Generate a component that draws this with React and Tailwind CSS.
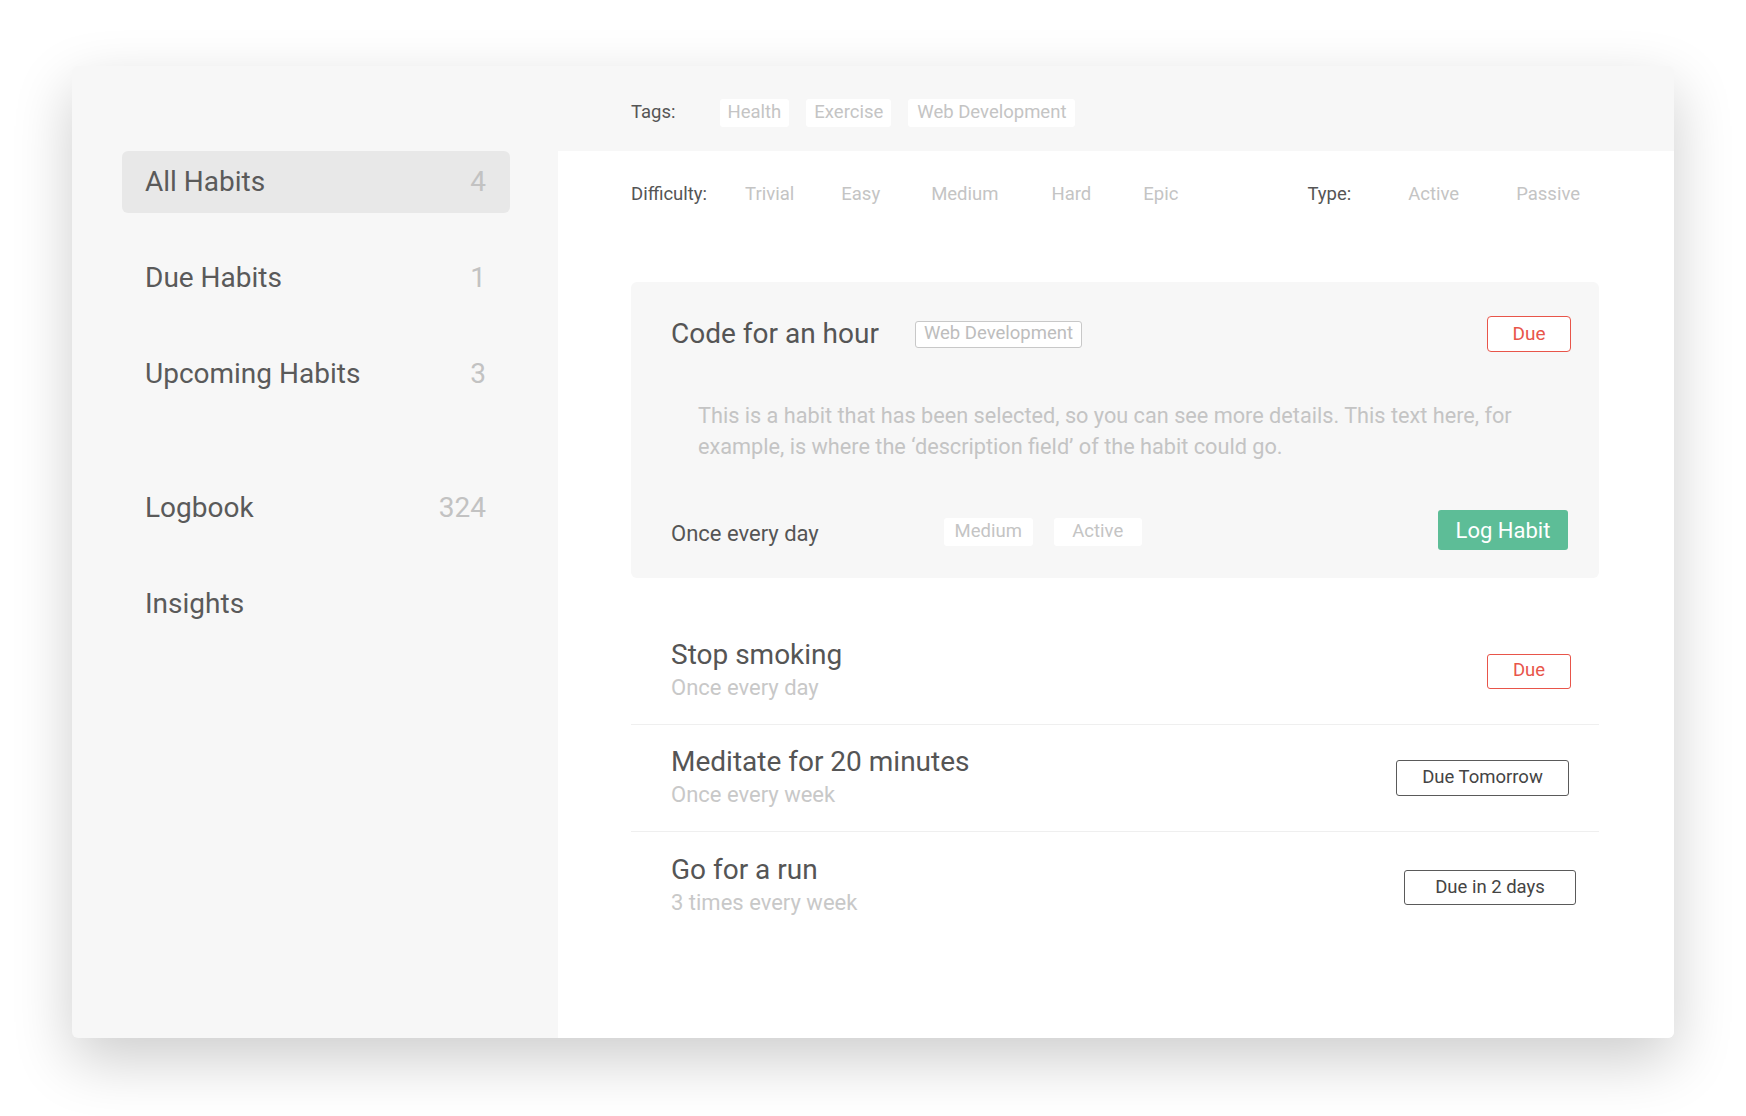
import React from 'react';

const navItems = [
	{ label: 'All Habits', count: '4', active: true },
	{ label: 'Due Habits', count: '1' },
	{ label: 'Upcoming Habits', count: '3' },
	{ label: 'Logbook', count: '324', spaced: true },
	{ label: 'Insights', count: '' },
];

const habits = [
	{ title: 'Stop smoking', freq: 'Once every day', due: 'Due', urgent: true, btn: 'w-[84px] h-[35px]' },
	{ title: 'Meditate for 20 minutes', freq: 'Once every week', due: 'Due Tomorrow', btn: 'w-[173px] h-[36px] mr-[2px]' },
	{ title: 'Go for a run', freq: '3 times every week', due: 'Due in 2 days', btn: 'w-[172px] h-[35px] -mr-[5px] mt-[4px]' },
];

function Chip({ children, className = '' }) {
	return (
		<span className={`h-[28px] flex items-center justify-center rounded-[3px] bg-white text-[18.5px] text-[#c4c4c4] ${className}`}>
			{children}
		</span>
	);
}

function App() {
	return (
		<div className="min-h-screen bg-white pl-[72px] pt-[66px] font-[family-name:Roboto,sans-serif]">
			<div className="w-[1602px] h-[972px] flex rounded-md bg-[#f7f7f7] overflow-hidden shadow-[0_22px_60px_rgba(0,0,0,0.2)]">
				{/* sidebar */}
				<div className="w-[486px] shrink-0 pt-[85px] pl-[50px] flex flex-col gap-[34px]">
					{navItems.map((item) => (
						<div
							key={item.label}
							className={`w-[388px] h-[62px] shrink-0 flex items-center justify-between pl-[23px] pr-[24px] rounded-md text-[28px] ${
								item.active ? 'bg-[#e8e8e8]' : ''
							} ${item.spaced ? 'mt-[38px]' : ''}`}
						>
							<span className="text-[#5a5a5a]">{item.label}</span>
							<span className="text-[#c2c2c2]">{item.count}</span>
						</div>
					))}
				</div>

				{/* main */}
				<div className="flex-1 flex flex-col">
					<div className="h-[85px] shrink-0 flex items-center pl-[73px] pt-[9px]">
						<span className="text-[18.5px] text-[#555]">Tags:</span>
						<div className="flex items-center gap-[17px] ml-[44px]">
							<Chip className="px-[8px]">Health</Chip>
							<Chip className="px-[8px]">Exercise</Chip>
							<Chip className="px-[9px]">Web Development</Chip>
						</div>
					</div>

					<div className="flex-1 bg-white pl-[73px] pr-[75px]">
						<div className="h-[28px] mt-[30px] flex items-center text-[18.5px] text-[#c4c4c4]">
							<span className="text-[#555]">Difficulty:</span>
							<span className="ml-[38px]">Trivial</span>
							<span className="ml-[47px]">Easy</span>
							<span className="ml-[51px]">Medium</span>
							<span className="ml-[53px]">Hard</span>
							<span className="ml-[52px]">Epic</span>
							<span className="ml-[129px] text-[#555]">Type:</span>
							<span className="ml-[57px]">Active</span>
							<span className="ml-[57px]">Passive</span>
						</div>

						{/* selected habit */}
						<div className="mt-[73px] rounded-md bg-[#f7f7f7] pt-[34px] pl-[40px] pr-[28px] pb-[28px]">
							<div className="h-[36px] flex items-center">
								<span className="text-[28px] leading-[34px] text-[#555]">Code for an hour</span>
								<span className="ml-[36px] h-[27px] px-[8px] flex items-center rounded-[3px] border-[1.5px] border-[#c8c8c8] bg-white text-[18.5px] text-[#bdbdbd]">
									Web Development
								</span>
								<button className="ml-auto w-[84px] h-[36px] rounded-[4px] border-[1.5px] border-[#e8554a] bg-white text-[19px] text-[#e8554a]">
									Due
								</button>
							</div>
							<p className="mt-[48px] pl-[27px] max-w-[880px] text-[21.7px] leading-[31px] text-[#c4c4c4]">
								This is a habit that has been selected, so you can see more details. This text here, for
								example, is where the ‘description field’ of the habit could go.
							</p>
							<div className="mt-[48px] h-[40px] flex items-center">
								<span className="mt-[7px] text-[22px] text-[#555]">Once every day</span>
								<div className="ml-[125px] mt-[4px] flex items-center gap-[21px]">
									<Chip className="w-[89px]">Medium</Chip>
									<Chip className="w-[88px]">Active</Chip>
								</div>
								<button className="ml-auto mr-[3px] w-[130px] h-[40px] rounded-[3px] bg-[#5dbd97] text-[22px] text-white">
									Log Habit
								</button>
							</div>
						</div>

						{/* habit list */}
						<div className="mt-[40px]">
							{habits.map((h, i) => (
								<div
									key={h.title}
									className={`h-[107px] flex items-center justify-between pl-[40px] pr-[28px] ${
										i < habits.length - 1 ? 'border-b border-[#efefef]' : ''
									}`}
								>
									<div>
										<div className="text-[28px] leading-[34px] text-[#555]">{h.title}</div>
										<div className="text-[22px] leading-[32px] text-[#c8c8c8]">{h.freq}</div>
									</div>
									<button
										className={`${h.btn} rounded-[3px] border-[1.5px] bg-white text-[18.5px] ${
											h.urgent ? 'border-[#e8554a] text-[#e8554a]' : 'border-[#5a5a5a] text-[#444]'
										}`}
									>
										{h.due}
									</button>
								</div>
							))}
						</div>
					</div>
				</div>
			</div>
		</div>
	);
}

export default App;
